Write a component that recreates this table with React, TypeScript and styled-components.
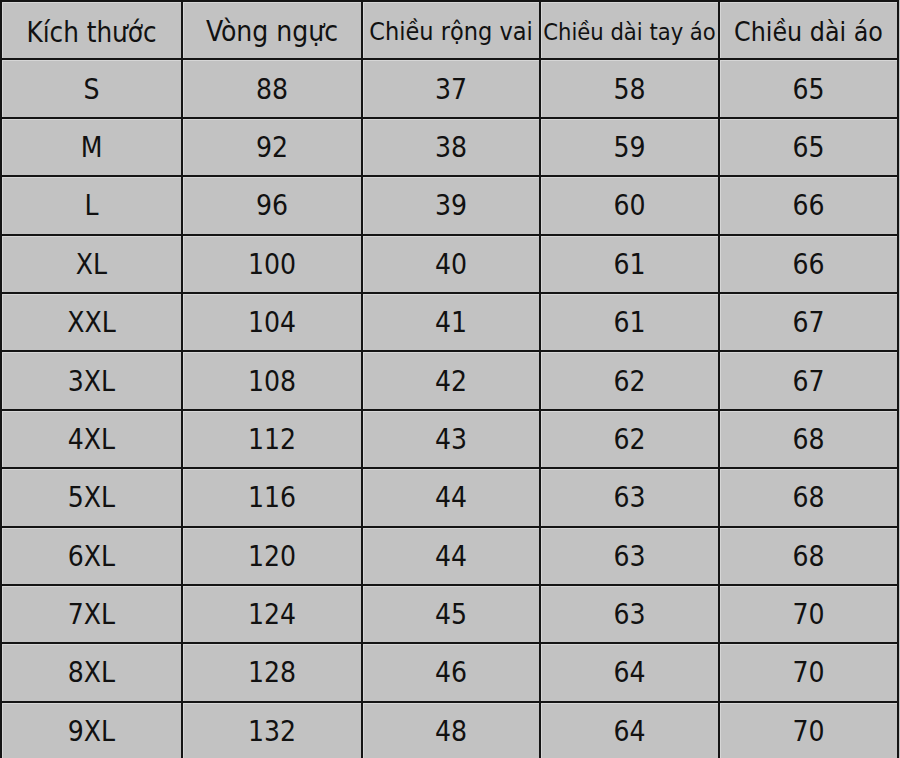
import { FC } from 'react'
import styled, { createGlobalStyle } from 'styled-components'

const Global = createGlobalStyle`
  html, body {
    margin: 0;
    padding: 0;
    background: #c2c2c2;
  }
  body {
    font-family: 'DejaVu Sans Condensed', 'DejaVu Sans', Tahoma, sans-serif;
    font-stretch: condensed;
    color: #111;
  }
`

const Table = styled.div`
  display: grid;
  grid-template-columns: 181px 180px 178px 179px 179px;
  grid-auto-rows: 58.4px;
  width: 899px;
  height: 758px;
  overflow: hidden;
  border-top: 2px solid #141414;
  border-left: 2px solid #141414;
  box-sizing: border-box;
  background: #c2c2c2;
`

const Cell = styled.div<{ size?: number }>`
  display: flex;
  align-items: center;
  justify-content: center;
  border-right: 2px solid #141414;
  border-bottom: 2px solid #141414;
  box-shadow: inset 1px 1px 0 #d6d6d6;
  font-size: ${({ size }) => size ?? 28}px;
  white-space: nowrap;
  overflow: hidden;
  padding-top: 1px;
`

const HeadCell = styled(Cell)`
  padding-top: 3px;
`

// header labels with the size each one is set at
const headers: [string, number][] = [
  ['Kích thước', 27.5],
  ['Vòng ngực', 28],
  ['Chiều rộng vai', 25],
  ['Chiều dài tay áo', 23.5],
  ['Chiều dài áo', 26.5],
]

const rows: (string | number)[][] = [
  ['S', 88, 37, 58, 65],
  ['M', 92, 38, 59, 65],
  ['L', 96, 39, 60, 66],
  ['XL', 100, 40, 61, 66],
  ['XXL', 104, 41, 61, 67],
  ['3XL', 108, 42, 62, 67],
  ['4XL', 112, 43, 62, 68],
  ['5XL', 116, 44, 63, 68],
  ['6XL', 120, 44, 63, 68],
  ['7XL', 124, 45, 63, 70],
  ['8XL', 128, 46, 64, 70],
  ['9XL', 132, 48, 64, 70],
]

const App: FC = () => {
  return (
    <>
      <Global />
      <Table>
        {headers.map(([label, size]) => (
          <HeadCell key={label} size={size}>
            {label}
          </HeadCell>
        ))}
        {rows.map((row) =>
          row.map((v, i) => <Cell key={`${row[0]}-${i}`}>{v}</Cell>)
        )}
      </Table>
    </>
  )
}

export default App
